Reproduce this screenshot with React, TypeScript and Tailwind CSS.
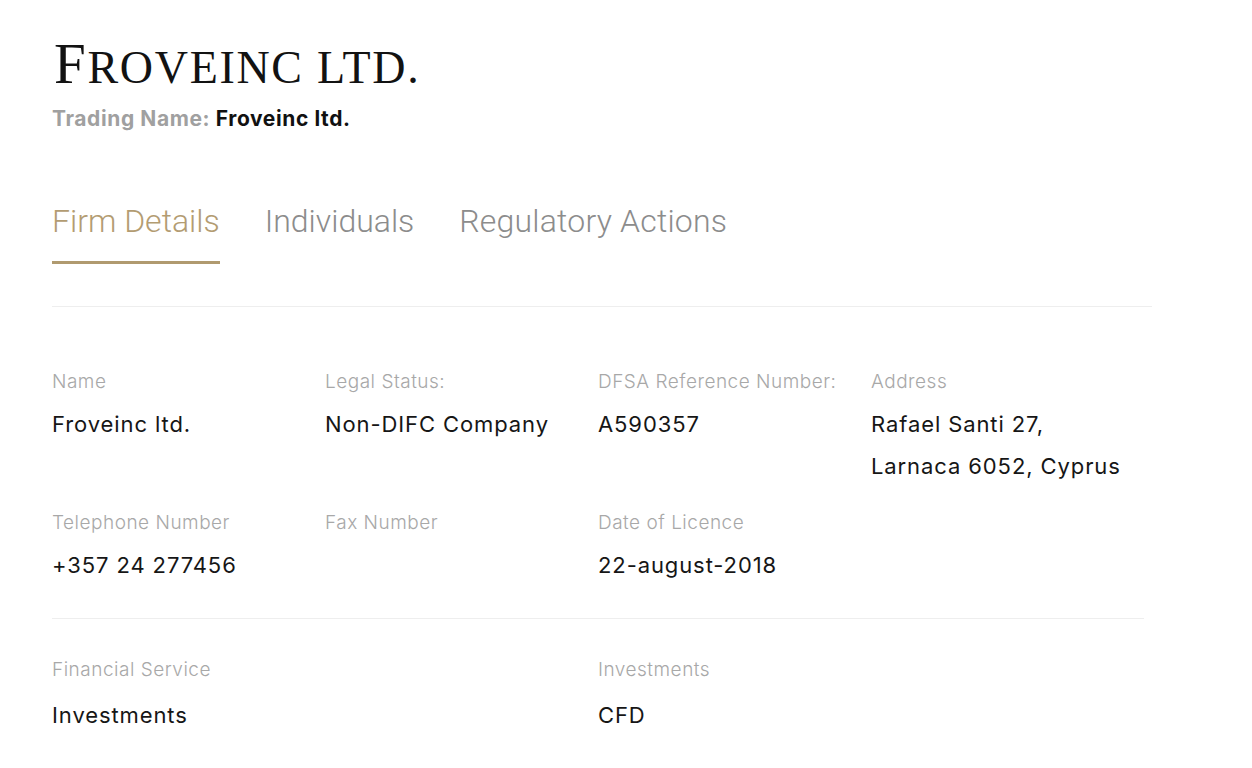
import React from "react";

const Field = ({ label, children, gap = "mt-[9px]" }: { label: string; children?: React.ReactNode; gap?: string }) => (
  <div className="flex flex-col">
    <div className="h-[24px] leading-[24px] text-[19px] tracking-[0.5px] font-light text-[#a8a8a8] whitespace-nowrap">{label}</div>
    <div className={`${gap} text-[22px] tracking-[0.9px] leading-[42px] text-[#161616] whitespace-nowrap`}>{children}</div>
  </div>
);

export default function App() {
  return (
    <div className="min-h-screen bg-white pl-[52px] pr-[100px]" style={{ fontFamily: "Inter, 'Noto Sans', sans-serif" }}>
      <div className="pt-[36px]">
        <h1
          className="text-[#121212] leading-[56px] h-[56px] tracking-[1.7px] font-normal pl-[2px]"
          style={{ fontFamily: "'Liberation Serif', serif" }}
        >
          <span className="text-[57px]">F</span>
          <span className="text-[46px]">ROVEINC LTD.</span>
        </h1>
        <div className="mt-[15px] text-[21px] tracking-[0.6px] font-bold leading-[24px]">
          <span className="text-[#a0a0a0]">Trading Name: </span>
          <span className="text-[#111]">Froveinc ltd.</span>
        </div>
      </div>

      <div className="mt-[70px] w-[1100px] border-b border-[#eeeeee]">
        <div className="flex gap-[45px] text-[32px] font-light" style={{ fontFamily: "Roboto, sans-serif" }}>
          <div className="flex flex-col">
            <span className="text-[#b39c72] leading-[40px]">Firm Details</span>
            <div className="mt-[20px] h-[3px] bg-[#b09a6f]" />
          </div>
          <span className="text-[#8c8c8c] leading-[40px]">Individuals</span>
          <span className="text-[#8c8c8c] leading-[40px] tracking-[0.2px]">Regulatory Actions</span>
        </div>
        <div className="h-[42px]" />
      </div>

      <div className="w-[1092px] border-b border-[#eeeeee] pt-[63px] pb-[32px]">
        <div className="grid grid-cols-[273px_273px_273px_273px]">
          <Field label="Name">Froveinc ltd.</Field>
          <Field label="Legal Status:">Non-DIFC Company</Field>
          <Field label="DFSA Reference Number:">A590357</Field>
          <Field label="Address">
            Rafael Santi 27,
            <br />
            Larnaca 6052, Cyprus
          </Field>
        </div>
        <div className="grid grid-cols-[273px_273px_273px_273px] pt-[24px]">
          <Field label="Telephone Number">+357 24 277456</Field>
          <Field label="Fax Number"></Field>
          <Field label="Date of Licence">22-august-2018</Field>
        </div>
      </div>

      <div className="pt-[39px] grid grid-cols-[546px_546px]">
        <Field label="Financial Service" gap="mt-[12px]">Investments</Field>
        <Field label="Investments" gap="mt-[12px]">CFD</Field>
      </div>
    </div>
  );
}
